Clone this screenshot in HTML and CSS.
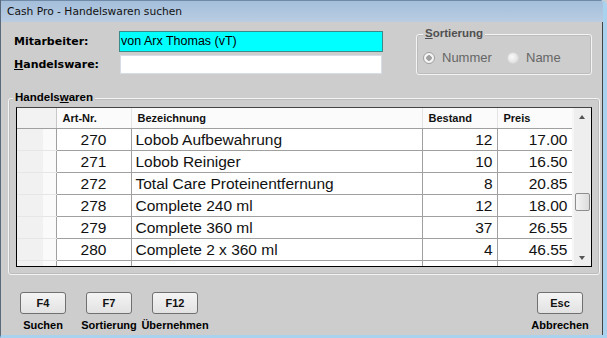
FILE: index.html
```html
<!DOCTYPE html>
<html lang="de">
  <head>
    <meta charset="UTF-8" />
    <title>Cash Pro - Handelswaren suchen</title>
    <link rel="stylesheet" href="styles.css">
  </head>
  <body>
    <div class="window">
      <div class="titlebar">Cash Pro - Handelswaren suchen</div>
      <div class="client">
        <div class="top">
          <div class="fields">
            <div class="field">
              <label class="lbl">Mitarbeiter:</label>
              <div class="input cyan">von Arx Thomas (vT)</div>
            </div>
            <div class="field">
              <label class="lbl"><u>H</u>andelsware:</label>
              <div class="input"></div>
            </div>
          </div>
          <div class="group sort">
            <span class="legend"><u>S</u>ortierung</span>
            <div class="radios">
              <span class="radio"><span class="dot checked"></span>Nummer</span>
              <span class="radio"><span class="dot"></span>Name</span>
            </div>
          </div>
        </div>

        <div class="group list">
          <span class="legend">Handels<u>w</u>aren</span>
          <div class="grid">
            <div class="grid-body">
              <table>
                <colgroup>
                  <col class="c-rh"><col class="c-nr"><col class="c-bez"><col class="c-num"><col class="c-num">
                </colgroup>
                <thead>
                  <tr><th></th><th>Art-Nr.</th><th>Bezeichnung</th><th>Bestand</th><th>Preis</th></tr>
                </thead>
                <tbody>
                  <tr><td class="rh"></td><td class="nr">270</td><td>Lobob Aufbewahrung</td><td class="num">12</td><td class="num">17.00</td></tr>
                  <tr><td class="rh"></td><td class="nr">271</td><td>Lobob Reiniger</td><td class="num">10</td><td class="num">16.50</td></tr>
                  <tr><td class="rh"></td><td class="nr">272</td><td>Total Care Proteinentfernung</td><td class="num">8</td><td class="num">20.85</td></tr>
                  <tr><td class="rh"></td><td class="nr">278</td><td>Complete 240 ml</td><td class="num">12</td><td class="num">18.00</td></tr>
                  <tr><td class="rh"></td><td class="nr">279</td><td>Complete 360 ml</td><td class="num">37</td><td class="num">26.55</td></tr>
                  <tr><td class="rh"></td><td class="nr">280</td><td>Complete 2 x 360 ml</td><td class="num">4</td><td class="num">46.55</td></tr>
                  <tr><td class="rh"></td><td></td><td></td><td></td><td></td></tr>
                </tbody>
              </table>
            </div>
            <div class="scrollbar">
              <span class="arrow up"></span>
              <span class="thumb"></span>
              <span class="arrow down"></span>
            </div>
          </div>
        </div>

        <div class="actions">
          <div class="keys">
            <div class="key"><button>F4</button><span>Suchen</span></div>
            <div class="key"><button>F7</button><span>Sortierung</span></div>
            <div class="key"><button>F12</button><span>Übernehmen</span></div>
          </div>
          <div class="key"><button>Esc</button><span>Abbrechen</span></div>
        </div>
      </div>
    </div>
  </body>
</html>
```

FILE: styles.css
```css
html,
body {
  margin: 0;
  padding: 0;
  background: #cdcdcd;
}
.window {
  width: 607px;
  height: 338px;
  box-sizing: border-box;
  border-left: 1px solid #5a6a7a;
  border-right: 4px solid #a9d2ef;
  border-bottom: 3px solid #a9d2ef;
  border-top-right-radius: 6px;
  background: #cdcdcd;
  font-family: "Liberation Sans", Arial, sans-serif;
  display: flex;
  flex-direction: column;
  overflow: hidden;
}
.titlebar {
  height: 22px;
  box-sizing: border-box;
  flex: none;
  padding-left: 6px;
  line-height: 22px;
  font-family: "DejaVu Sans", sans-serif;
  font-size: 10.7px;
  color: #111;
  background: linear-gradient(#a4bedb, #b9cde2);
  border-top: 1px solid #6f8aa6;
}
.client {
  flex: 1;
  min-height: 0;
  padding: 8px 0 0 6px;
  display: flex;
  flex-direction: column;
  border-right: 1px solid #444;
}
.top {
  display: flex;
  height: 68px;
  flex: none;
}
.fields {
  width: 395px;
  padding: 0 0 0 7px;
}
.field {
  display: flex;
  align-items: center;
  height: 23px;
}
.lbl {
  width: 106px;
  font-family: "DejaVu Sans", sans-serif;
  font-size: 11px;
  font-weight: bold;
  color: #000;
}
.input {
  width: 262px;
  height: 19px;
  box-sizing: border-box;
  background: #fff;
  border: 1px solid #d6dde6;
  font-size: 12.5px;
  line-height: 18px;
  padding-left: 1px;
}
.input.cyan {
  background: #00ffff;
  border-color: #3a8a8a;
  width: 264px;
  height: 21px;
  margin-left: -1px;
}
.group {
  position: relative;
  box-sizing: border-box;
  border: 1px solid #f4f4f4;
  box-shadow: inset 0 0 0 1px #bcbcbc;
  border-radius: 3px;
}
.legend {
  position: absolute;
  top: -8px;
  left: 6px;
  padding: 0 2px;
  background: #cdcdcd;
  font-size: 11.5px;
  font-weight: bold;
  color: #000;
}
.sort {
  margin: 4px 0 0 7px;
  width: 176px;
  height: 41px;
}
.sort .legend {
  color: #505050;
}
.radios {
  display: flex;
  padding: 15px 0 0 6px;
  font-size: 13px;
  color: #666;
}
.radio {
  display: flex;
  align-items: center;
  width: 93px;
}
.dot {
  width: 12px;
  height: 12px;
  border-radius: 50%;
  margin-right: 7px;
  background: radial-gradient(circle at 40% 40%, #fafafa, #d8d8d8);
  border: 1px solid #d4d4d4;
  box-sizing: border-box;
}
.dot.checked {
  border-color: #a0a0a0;
  background: radial-gradient(circle, #a0a0a0 0 2.5px, #f4f4f4 3px);
}
.list {
  flex: none;
  margin: 0 0 0 1px;
  width: 592px;
  height: 177px;
  padding: 8px 0 0 7px;
}
.list .legend {
  left: 4px;
}
.grid {
  display: flex;
  width: 576px;
  height: 160px;
  box-sizing: border-box;
  border: 1px solid #000;
  border-top-color: #444;
  background: #f6f6f6;
}
.grid-body {
  width: 555px;
  overflow: hidden;
  background: #fff;
  margin-right: 2px;
}
table {
  table-layout: fixed;
  border-collapse: collapse;
  width: 555px;
}
.c-rh { width: 39px; }
.c-nr { width: 75px; }
.c-bez { width: 291px; }
.c-num { width: 75px; }
th {
  height: 20px;
  padding: 0 0 0 6px;
  text-align: left;
  font-size: 11px;
  font-weight: bold;
  color: #111;
  background: #fbfbfb;
  border-right: 1px solid #e4e4e4;
  border-bottom: 1px solid #a0a0a0;
}
th:first-child {
  background: #f2f2f2;
  border-right-color: #c8c8c8;
}
td {
  height: 21px;
  padding: 0 4px;
  font-size: 15.5px;
  color: #111;
  border: 1px solid #a0a0a0;
  border-top: none;
  white-space: nowrap;
}
td.rh {
  background: linear-gradient(90deg, #f1f1f1 0 26px, #fafafa 26px);
  border-left: none;
  border-bottom-color: #e6e6e6;
  border-right-color: #a0a0a0;
}
td.nr {
  text-align: center;
}
td.num {
  text-align: right;
}
.scrollbar {
  position: relative;
  width: 17px;
  background: #eeeeee;
}
.arrow {
  position: absolute;
  left: 5px;
  width: 0;
  height: 0;
  border-left: 3.5px solid transparent;
  border-right: 3.5px solid transparent;
}
.arrow.up {
  top: 7px;
  border-bottom: 4px solid #555;
}
.arrow.down {
  bottom: 6px;
  border-top: 4px solid #555;
}
.thumb {
  position: absolute;
  top: 85px;
  left: 1px;
  width: 15px;
  height: 18px;
  box-sizing: border-box;
  border: 1px solid #8e8e8e;
  border-radius: 2px;
  background: linear-gradient(90deg, #f4f4f4, #dcdcdc);
}
.actions {
  display: flex;
  justify-content: space-between;
  padding: 17px 9px 0 3px;
}
.keys {
  display: flex;
}
.key {
  display: flex;
  flex-direction: column;
  align-items: center;
  width: 66px;
}
.key button {
  width: 46px;
  height: 22px;
  padding: 0;
  border: 1px solid #707070;
  border-radius: 3px;
  background: linear-gradient(#f4f4f4, #e2e2e2);
  font-family: "Liberation Sans", Arial, sans-serif;
  font-size: 11px;
  font-weight: bold;
  color: #111;
}
.key span {
  margin-top: 5px;
  font-size: 11px;
  font-weight: bold;
  color: #000;
  white-space: nowrap;
}
```
